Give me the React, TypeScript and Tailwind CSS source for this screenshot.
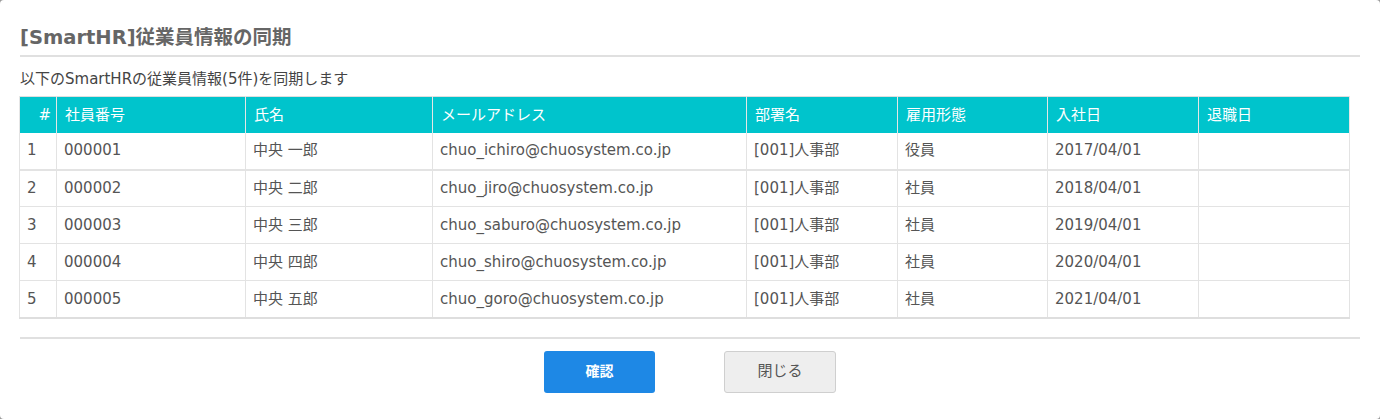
import React from 'react'

const font = { fontFamily: '"DejaVu Sans", "Noto Sans CJK JP", sans-serif' }

const columns = [
  { label: '#', width: 'w-[37px]', align: 'text-right pr-[5px]' },
  { label: '社員番号', width: 'w-[189px]', align: '' },
  { label: '氏名', width: 'w-[187px]', align: '' },
  { label: 'メールアドレス', width: 'w-[314px]', align: '' },
  { label: '部署名', width: 'w-[151px]', align: '' },
  { label: '雇用形態', width: 'w-[150px]', align: '' },
  { label: '入社日', width: 'w-[151px]', align: '' },
  { label: '退職日', width: 'w-[151px]', align: '' },
]

const employees = [
  ['1', '000001', '中央 一郎', 'chuo_ichiro@chuosystem.co.jp', '[001]人事部', '役員', '2017/04/01', ''],
  ['2', '000002', '中央 二郎', 'chuo_jiro@chuosystem.co.jp', '[001]人事部', '社員', '2018/04/01', ''],
  ['3', '000003', '中央 三郎', 'chuo_saburo@chuosystem.co.jp', '[001]人事部', '社員', '2019/04/01', ''],
  ['4', '000004', '中央 四郎', 'chuo_shiro@chuosystem.co.jp', '[001]人事部', '社員', '2020/04/01', ''],
  ['5', '000005', '中央 五郎', 'chuo_goro@chuosystem.co.jp', '[001]人事部', '社員', '2021/04/01', ''],
]

export default function App() {
  return (
    <main className="h-[419px] w-[1380px] overflow-hidden bg-[#9a9a9a]" style={font}>
      <section className="flex h-full w-full flex-col rounded-[4px] bg-white px-[20px]">
        <h1 className="mt-[26px] h-[24px] text-[19.5px] font-bold leading-[24px] text-[#666]">[SmartHR]従業員情報の同期</h1>
        <div className="mt-[5px] h-[2px] bg-[#e0e0e0]" />

        <p className="mt-[13px] h-[18px] text-[15px] leading-[18px] text-[#444]">以下のSmartHRの従業員情報(5件)を同期します</p>

        {/* Employees table */}
        <table className="-ml-px mt-[8px] w-[1331px] table-fixed border-collapse border border-b-2 border-[#dedede] text-[15px] text-[#555]">
          <thead>
            <tr className="h-[36px] bg-[#00c4cc] text-white">
              {columns.map((c) => (
                <th key={c.label} className={`${c.width} border-x border-[#e6e6e6] px-[8px] text-left font-normal ${c.align}`}>
                  {c.label}
                </th>
              ))}
            </tr>
          </thead>
          <tbody>
            {employees.map((row, i) => (
              <tr key={row[0]} className={`h-[37px] border-b border-[#e3e3e3] ${i === 0 ? 'border-b-2' : ''}`}>
                {row.map((cell, j) => (
                  <td key={j} className="border-x border-[#e3e3e3] px-[8px] pl-[7px] whitespace-nowrap">
                    {cell}
                  </td>
                ))}
              </tr>
            ))}
          </tbody>
        </table>

        <div className="mt-[18px] h-[2px] bg-[#e0e0e0]" />

        <div className="mt-[12px] flex justify-center gap-[69px]">
          <button
            className="h-[42px] w-[111px] rounded-[3px] bg-[#1e88e5] text-[14px] font-bold text-white"
            type="button"
          >
            確認
          </button>
          <button
            className="h-[42px] w-[112px] rounded-[3px] border border-[#cfcfcf] bg-[#eeeeee] text-[15px] text-[#555]"
            type="button"
          >
            閉じる
          </button>
        </div>
      </section>
    </main>
  )
}
